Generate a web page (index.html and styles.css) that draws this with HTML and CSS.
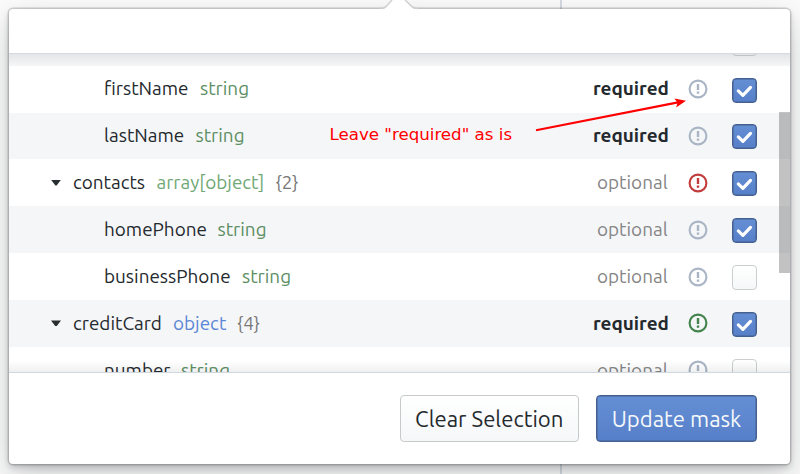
FILE: index.html
```html
<!DOCTYPE html>
<html lang="en">
<head>
<meta charset="utf-8">
<title>Update mask</title>
<link rel="stylesheet" href="styles.css">
</head>
<body>
<svg class="symbols" aria-hidden="true">
  <symbol id="alert" viewBox="0 0 20 20"><circle cx="10" cy="10" r="8.4" fill="none" stroke="currentColor" stroke-width="2.1"/><path d="M8.8 4.900h2.400v6.200H8.800zM8.800 12.500h2.400v2.300H8.800z" fill="currentColor"/></symbol>
  <symbol id="tick" viewBox="0 0 25 25"><path d="M6.300 12.900l4.600 4.400 7.600-7.900" fill="none" stroke="#fff" stroke-width="3.2" stroke-linecap="round" stroke-linejoin="round"/></symbol>
</svg>
<div class="divider"></div>
<main class="popover">
  <svg class="pointer" viewBox="0 0 46 11"><path d="M0 11V9.500C6 9.500 8 6 12 0H25C30 6 32 9.500 38 9.500V11z" fill="#fff"/><path d="M0 8.500C6 8.500 7 5 12 0M25 0C31 5 32 8.500 38 8.500" fill="none" stroke="#cfd0d0" stroke-width="1.400"/></svg>
  <header class="header"></header>
  <section class="list">
    <div class="rows">
      <div class="row shaded"><span class="box"></span></div>
      <div class="row child"><span class="name n1">firstName</span><span class="type string">string</span><span class="need required">required</span><svg class="alert"><use href="#alert"/></svg><span class="box on"><svg><use href="#tick"/></svg></span></div>
      <div class="row child shaded"><span class="name n2">lastName</span><span class="type string">string</span><span class="need required">required</span><svg class="alert"><use href="#alert"/></svg><span class="box on"><svg><use href="#tick"/></svg></span></div>
      <div class="row"><i class="caret"></i><span class="name n3">contacts</span><span class="type array">array[object]</span><span class="count">{2}</span><span class="need">optional</span><svg class="alert red"><use href="#alert"/></svg><span class="box on"><svg><use href="#tick"/></svg></span></div>
      <div class="row child shaded"><span class="name n4">homePhone</span><span class="type string">string</span><span class="need">optional</span><svg class="alert"><use href="#alert"/></svg><span class="box on"><svg><use href="#tick"/></svg></span></div>
      <div class="row child"><span class="name n5">businessPhone</span><span class="type string">string</span><span class="need">optional</span><svg class="alert"><use href="#alert"/></svg><span class="box"></span></div>
      <div class="row shaded"><i class="caret"></i><span class="name n6">creditCard</span><span class="type object">object</span><span class="count">{4}</span><span class="need required">required</span><svg class="alert green"><use href="#alert"/></svg><span class="box on"><svg><use href="#tick"/></svg></span></div>
      <div class="row child"><span class="name n7">number</span><span class="type string">string</span><span class="need">optional</span><svg class="alert"><use href="#alert"/></svg><span class="box"></span></div>
    </div>
    <div class="scrollbar"></div>
  </section>
  <footer class="footer">
    <button class="button clear">Clear Selection</button>
    <button class="button primary">Update mask</button>
  </footer>
</main>
<div class="note">Leave "required" as is</div>
<svg class="arrow" viewBox="0 0 800 474"><path d="M536 130.300L678 102.400" stroke="#f00" stroke-width="2.1"/><path d="M686 100.800L674.400 98.600 677.500 102.500 676.200 107.500z" fill="#f00"/></svg>
</body>
</html>
```
FILE: styles.css
```css
* { box-sizing: border-box; }
body { margin: 0; width: 800px; height: 474px; overflow: hidden; position: relative; background: #fbfbfb; font-family: Ubuntu, "Noto Sans", sans-serif; color: #24292e; }
.symbols { position: absolute; width: 0; height: 0; }
.divider { position: absolute; left: 560px; top: 0; width: 1.500px; height: 474px; background: #d5dbe1; }
.popover { position: relative; width: 781px; height: 455px; margin: 9px 0 0 9px; background: #fff; border-radius: 4px; box-shadow: 0 0 0 1.400px rgba(16,22,26,.18), 0 3px 6px rgba(16,22,26,.2), 0 12px 32px rgba(16,22,26,.2); display: flex; flex-direction: column; }
.pointer { position: absolute; left: 371px; top: -9px; width: 46px; height: 11px; }
.header { height: 45px; flex: none; border-bottom: 1px solid #d3dae1; }
.list { position: relative; height: 318px; flex: none; overflow: hidden; }
.list::before, .list::after { content: ""; position: absolute; left: 0; right: 0; z-index: 1; }
.list::before { top: 0; height: 12px; background: linear-gradient(rgba(16,30,40,.08), transparent); }
.list::after { bottom: 0; height: 11px; background: linear-gradient(transparent, rgba(16,22,26,.065)); }
.rows { margin-top: -35.200px; }
.row { height: 46.860px; display: flex; align-items: center; padding: 0 33px 0 42px; font-size: 18.900px; line-height: 26px; white-space: nowrap; }
.row.child { padding-left: 95px; }
.shaded { background: #f5f6f8; }
.caret { width: 10px; height: 6px; margin-right: 12px; background: #292e31; clip-path: polygon(0 0, 100% 0, 58% 92%, 50% 100%, 42% 92%); }
.name, .type, .count, .need { position: relative; top: -.7px; }
.name { margin-right: 11.500px; }
.n1 { width: 84.500px; } .n2 { width: 80px; } .n3 { width: 72px; }
.n4 { width: 102px; } .n5 { width: 126.500px; } .n6 { width: 88.500px; } .n7 { width: 65.500px; }
.string { color: #5c8e63; width: 49px; }
.array { color: #70a875; width: 108px; }
.object { color: #5c86d5; width: 53px; }
.count { color: #777; margin-left: 11px; }
.need { margin-left: auto; color: #858585; width: 71px; }
.required { color: #24292e; font-weight: 600; width: 75px; }
.alert { width: 20px; height: 20px; margin-left: 19.500px; color: #a9b5c5; }
.red { color: #c23c3c; }
.green { color: #43844c; }
.box { width: 25px; height: 25px; margin: 2px 0 0 24.500px; border: 1px solid #cbcecf; border-radius: 4px; background: linear-gradient(#fff, #f6f7f8); }
.row:first-child .box { margin-left: auto; }
.on { border-color: #45618f; background: linear-gradient(#658fd4, #567fc9); box-shadow: inset 0 0 0 .5px #45618f; }
.on svg { display: block; width: 25px; height: 25px; margin: -1px; }
.scrollbar { position: absolute; right: 0; top: 58px; width: 11.500px; height: 161px; background: rgba(0,0,0,.24); }
.footer { flex: 1; border-top: 1px solid #d0d8df; display: flex; justify-content: flex-end; align-items: flex-start; gap: 17px; padding: 22px 33px 0 0; }
.button { height: 47px; border: 1px solid #c7cacb; border-radius: 4px; background: linear-gradient(#fff, #f5f7f8); font: 22.150px/45px Ubuntu, "Noto Sans", sans-serif; color: #24292e; padding: 0; white-space: nowrap; }
.clear { width: 179.500px; }
.primary { width: 161px; color: #f5f8fa; border-color: #45618f; background: linear-gradient(#658fd4, #567fc9); box-shadow: inset 0 0 0 .5px #45618f; }
.note { position: absolute; left: 329.500px; top: 124px; font: 16.650px/22px "DejaVu Sans", sans-serif; color: #f00; white-space: nowrap; }
.arrow { position: absolute; inset: 0; width: 800px; height: 474px; pointer-events: none; }
```
